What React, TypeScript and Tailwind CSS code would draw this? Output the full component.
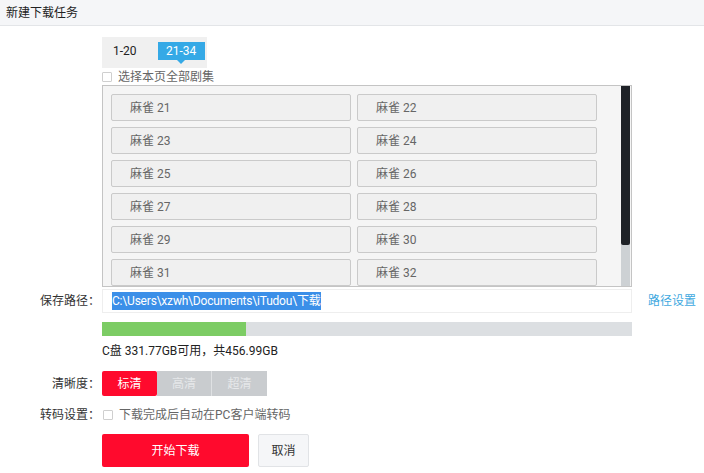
import React from "react";

const items = [21, 22, 23, 24, 25, 26, 27, 28, 29, 30, 31, 32];

export default function App() {
  return (
    <div
      className="w-[704px] h-[473px] bg-white text-[12px] text-[#333] overflow-hidden"
      style={{ fontFamily: 'Roboto, "Noto Sans CJK SC", sans-serif' }}
    >
      <div className="h-[26px] bg-[#f5f6f8] border-b border-[#e3e5e8] flex items-center pl-[6px] text-[12px] text-[#222]">
        新建下载任务
      </div>

      <div className="pl-[102px]">
        {/* tabs */}
        <div className="mt-[11px] w-[105px] h-[31px] bg-[#f0f0f0] flex items-start">
          <div className="ml-[11px] mt-[5px] h-[18px] flex items-center text-[12px] text-[#222]">1-20</div>
          <div className="relative ml-[21px] mt-[5px] w-[47px] h-[18px] bg-[#35a9e6] text-white flex items-center justify-center text-[12px]">
            21-34
            <div className="absolute left-1/2 -translate-x-1/2 top-[18px] w-0 h-0 border-l-[4px] border-r-[4px] border-t-[4px] border-l-transparent border-r-transparent border-t-[#35a9e6]" />
          </div>
        </div>

        {/* select all */}
        <div className="h-[16px] mt-[1px] flex items-center">
          <div className="w-[10px] h-[10px] border border-[#cfcfcf] bg-white rounded-[1px]" />
          <span className="ml-[6px] text-[#666] text-[12px]">选择本页全部剧集</span>
        </div>

        {/* list */}
        <div className="w-[530px] h-[202px] border border-[#c4c4c4] bg-[#f5f5f5] flex overflow-hidden">
          <div className="flex-1 pl-[8px] pt-[8px] overflow-hidden">
            <div className="grid grid-cols-[240px_240px] gap-x-[6px] gap-y-[6px]">
              {items.map((n) => (
                <div
                  key={n}
                  className="h-[27px] bg-[#f0f0f0] border border-[#cacaca] rounded-[2px] flex items-center pl-[18px] text-[#666] text-[12px]"
                >
                  麻雀 {n}
                </div>
              ))}
            </div>
          </div>
          <div className="w-[9px] mr-[1px] flex flex-col bg-[#cdd1d4]">
            <div className="h-[159px] bg-[#1e2227] rounded-b-[2px]" />
          </div>
        </div>
      </div>

      {/* path row */}
      <div className="flex items-center mt-[2px] h-[24px]">
        <div className="w-[100px] text-right text-[12px] text-[#333]">保存路径：</div>
        <div className="ml-[2px] w-[530px] h-[24px] bg-white border border-[#eeeeee] flex items-center pl-[9px]">
          <span className="bg-[#3b8fe8] text-white text-[12px] leading-[18px] tracking-[-0.2px]">C:\Users\xzwh\Documents\iTudou\下载</span>
        </div>
        <div className="ml-[16px] text-[#3fa9e0] text-[12px]">路径设置</div>
      </div>

      {/* progress */}
      <div className="pl-[102px] mt-[9px]">
        <div className="w-[530px] h-[14px] bg-[#dcdfe2] flex">
          <div className="w-[144px] h-full bg-[#7ccc64]" />
        </div>
        <div className="mt-[7px] h-[16px] flex items-center text-[12px] text-[#222]">
          C盘 331.77GB可用，共456.99GB
        </div>
      </div>

      {/* quality */}
      <div className="flex items-center mt-[12px] h-[25px]">
        <div className="w-[100px] text-right text-[12px] text-[#333]">清晰度：</div>
        <div className="ml-[2px] flex">
          <div className="w-[55px] h-[25px] bg-[#ff0a2d] text-white rounded-[2px] flex items-center justify-center text-[12px]">标清</div>
          <div className="w-[55px] h-[25px] bg-[#c9cccf] text-[#e6e8ea] border-r border-[#dfe1e3] flex items-center justify-center text-[12px]">高清</div>
          <div className="w-[55px] h-[25px] bg-[#c9cccf] text-[#e6e8ea] flex items-center justify-center text-[12px]">超清</div>
        </div>
      </div>

      {/* transcode */}
      <div className="flex items-center mt-[12px] h-[14px]">
        <div className="w-[100px] text-right text-[12px] text-[#333]">转码设置：</div>
        <div className="ml-[3px] w-[10px] h-[10px] border border-[#cfcfcf] bg-white rounded-[1px]" />
        <span className="ml-[6px] text-[#666] text-[12px]">下载完成后自动在PC客户端转码</span>
      </div>

      {/* buttons */}
      <div className="flex items-center pl-[102px] mt-[12px]">
        <div className="w-[147px] h-[33px] bg-[#ff0a2d] text-white rounded-[2px] flex items-center justify-center text-[12px]">开始下载</div>
        <div className="ml-[9px] w-[51px] h-[33px] bg-[#f5f6f8] border border-[#e1e3e6] rounded-[2px] flex items-center justify-center text-[12px] text-[#333]">取消</div>
      </div>
    </div>
  );
}
